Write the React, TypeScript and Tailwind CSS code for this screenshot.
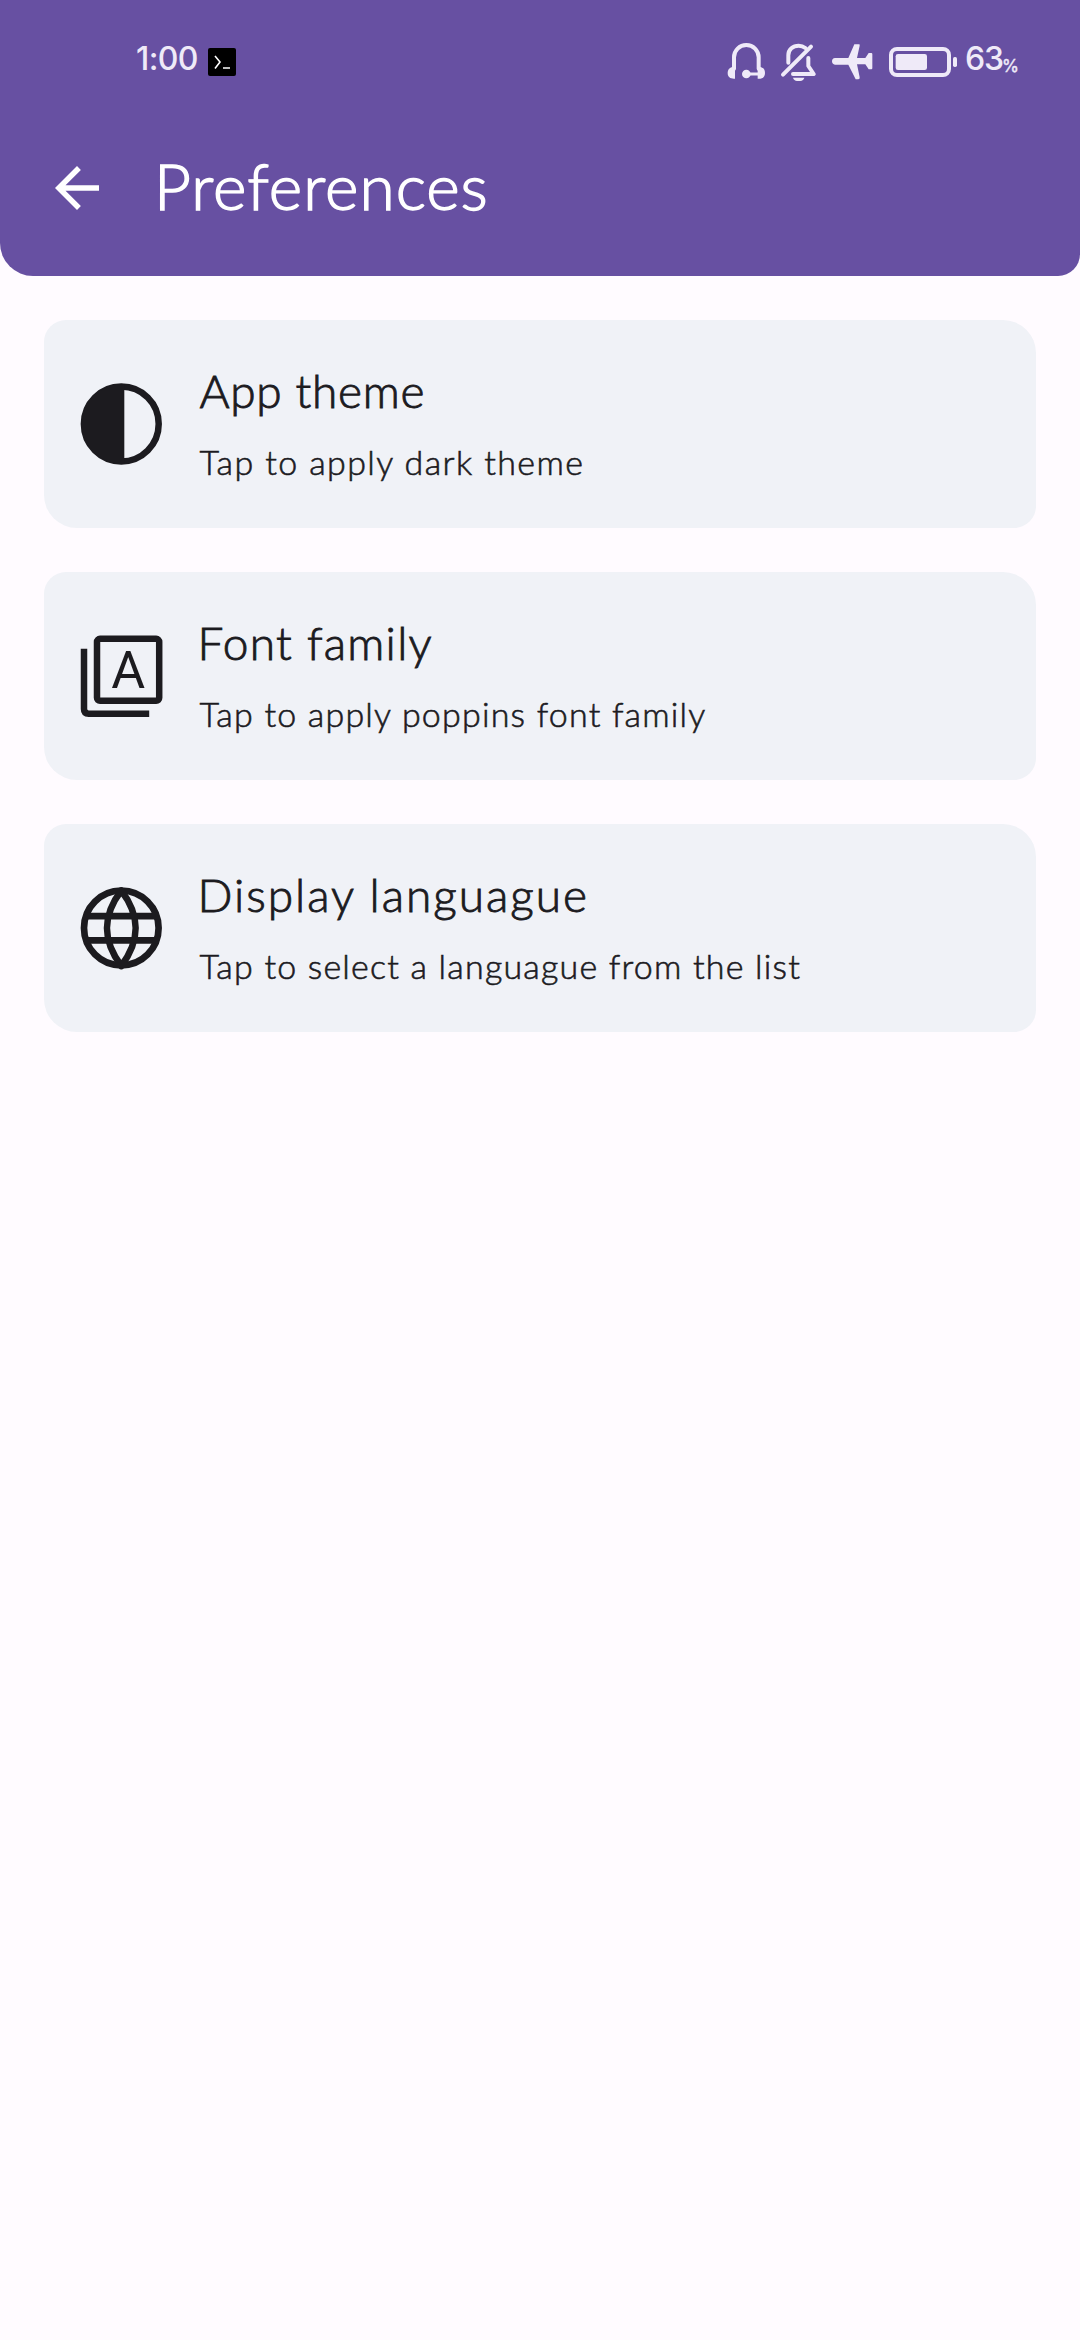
import type { ReactNode } from "react";

function StatusBar() {
  return (
    <div className="flex h-[122px] items-start pr-[59px] pl-[136px] font-['Inter',sans-serif] font-medium text-[#efeaf8]">
      <span className="mt-[39px] text-[32px] leading-10 tracking-[-0.6px]">1:00</span>
      <svg className="mt-12 ml-[10px] h-7 w-7" viewBox="0 0 28 28" fill="none">
        <rect width="28" height="28" rx="2" fill="#000" />
        <path d="M7 8l5 6-5 6.5M15 20h7" stroke="#fff" strokeWidth="1.6" />
      </svg>
      <div className="ml-auto flex items-start">
        <svg className="mt-[42px] h-[39px] w-[42px]" viewBox="45 36 126 117" fill="none" stroke="currentColor" strokeLinecap="round">
          <path d="M69 116V82a37 37 0 0 1 74 0v34" strokeWidth="12" />
          <path d="M72 110v36c-13 1-22-4-22-17s9-20 22-19zM140 110v36c14 1 22-4 22-17s-8-20-22-19z" fill="currentColor" stroke="none" />
          <path d="M108 132h38" strokeWidth="9" />
          <circle cx="106" cy="132" r="13" fill="currentColor" stroke="none" />
        </svg>
        <svg className="mt-[42px] ml-3 h-[39px] w-9" viewBox="207 36 108 117" fill="none" stroke="currentColor" strokeLinecap="round" strokeLinejoin="round">
          <path d="M232 98V76c0-18 14-29 31-29 8 0 15 3 20 7M292 84v24l16 24h-62" strokeWidth="12" />
          <path d="M216 134L300 50" strokeWidth="12" />
          <path d="M246 143h34c-3 14-31 14-34 0z" fill="currentColor" stroke="none" />
        </svg>
        <svg className="mt-[42px] ml-[15px] h-[39px] w-[42px]" viewBox="360 36 126 117" fill="currentColor">
          <path d="M372 84h40L430 43h14q3 0 2 4L438 84h25l10-15h8q3 0 3 4v41q0 4-3 4h-8l-10-15h-25l8 39q1 6-4 6h-8L412 104h-40q-9-1-9-10t9-10z" />
        </svg>
        <svg className="mt-[42px] ml-[15px] h-[39px] w-[70px]" viewBox="51 36 210 117" fill="none">
          <rect x="60" y="57" width="174" height="78" rx="18" stroke="currentColor" strokeWidth="12" />
          <rect x="74" y="72" width="94" height="48" rx="7" fill="currentColor" />
          <rect x="246" y="81" width="12" height="30" rx="5" fill="currentColor" />
        </svg>
        <span className="mt-[39px] ml-[7px] w-[37px] text-[32px] leading-10 tracking-[-1.2px]">63</span>
        <span className="mt-[56px] w-[19px] text-[17px] leading-5 [-webkit-text-stroke:0.3px_#efeaf8]">%</span>
      </div>
    </div>
  );
}

function ContrastIcon() {
  return (
    <svg className="h-[99px] w-[99px]" viewBox="0 0 99 99" fill="none">
      <circle cx="49.3" cy="49" r="37.4" stroke="currentColor" strokeWidth="6.5" />
      <path d="M52.3 9.5v79h-3a39.5 39.5 0 0 1 0-79z" fill="currentColor" />
    </svg>
  );
}

function FontIcon() {
  return (
    <svg className="h-[99px] w-[99px]" viewBox="0 0 99 99" fill="none" stroke="currentColor" strokeWidth="6.5">
      <rect x="25" y="11.8" width="62.2" height="62" rx="3" />
      <path d="M12 21.8V82q0 4.7 4.7 4.7h60.5" />
      <text x="56.2" y="61.3" textAnchor="middle" fill="currentColor" stroke="none" className="font-['Roboto',sans-serif] text-[52px] font-normal">A</text>
    </svg>
  );
}

function GlobeIcon() {
  return (
    <svg className="h-[99px] w-[99px]" viewBox="0 0 99 99" fill="none" stroke="currentColor" strokeWidth="6.7">
      <circle cx="49.3" cy="49" r="37.3" />
      <path d="M14 37.2h71M14 61.4h71" />
      <path d="M49.3 11.5C30 37 30 61 49.3 87C68.6 61 68.6 37 49.3 11.5z" strokeLinejoin="round" />
    </svg>
  );
}

type PreferenceProps = {
  icon: ReactNode;
  title: string;
  detail: string;
  titleClass: string;
  detailClass: string;
};

function PreferenceCard({ icon, title, detail, titleClass, detailClass }: PreferenceProps) {
  return (
    <button className="flex h-52 w-full items-center rounded-tl-[22px] rounded-tr-[33px] rounded-br-[22px] rounded-bl-[33px] bg-[#f0f2f7] pl-[27.5px] text-left whitespace-nowrap">
      {icon}
      <div className="ml-[29px] flex flex-col gap-4">
        <span className={`text-[46px] leading-[60px] [-webkit-text-stroke:0.9px_#1c1b1f] ${titleClass}`}>{title}</span>
        <span className={`text-[34px] leading-[50px] [-webkit-text-stroke:0.6px_#1c1b1f] ${detailClass}`}>{detail}</span>
      </div>
    </button>
  );
}

export default function App() {
  return (
    <div className="min-h-[2340px] w-[1080px] bg-[#fffbff] font-['Lato',sans-serif] font-light text-[#1c1b1f]">
      <header className="h-[276px] rounded-br-[22px] rounded-bl-[33px] bg-[#6750a2] text-white">
        <StatusBar />
        <div className="flex h-[132px] items-center pl-11">
          <svg className="h-[66px] w-[66px]" viewBox="0 0 24 24" fill="currentColor">
            <path d="M20 11H7.83l5.59-5.59L12 4l-8 8 8 8 1.41-1.41L7.83 13H20v-2z" />
          </svg>
          <h1 className="mb-[5px] ml-11 text-[64px] leading-[80px] tracking-[1px] [-webkit-text-stroke:1.4px_#fff]">Preferences</h1>
        </div>
      </header>
      <main className="flex flex-col gap-11 px-11 pt-11">
        <PreferenceCard icon={<ContrastIcon />} title="App theme" detail="Tap to apply dark theme" titleClass="tracking-[0.7px]" detailClass="tracking-[1.4px]" />
        <PreferenceCard icon={<FontIcon />} title="Font family" detail="Tap to apply poppins font family" titleClass="-ml-0.5 tracking-[1.3px]" detailClass="tracking-[1.2px]" />
        <PreferenceCard icon={<GlobeIcon />} title="Display languague" detail="Tap to select a languague from the list" titleClass="-ml-0.5 tracking-[2px]" detailClass="tracking-[1.2px]" />
      </main>
    </div>
  );
}
